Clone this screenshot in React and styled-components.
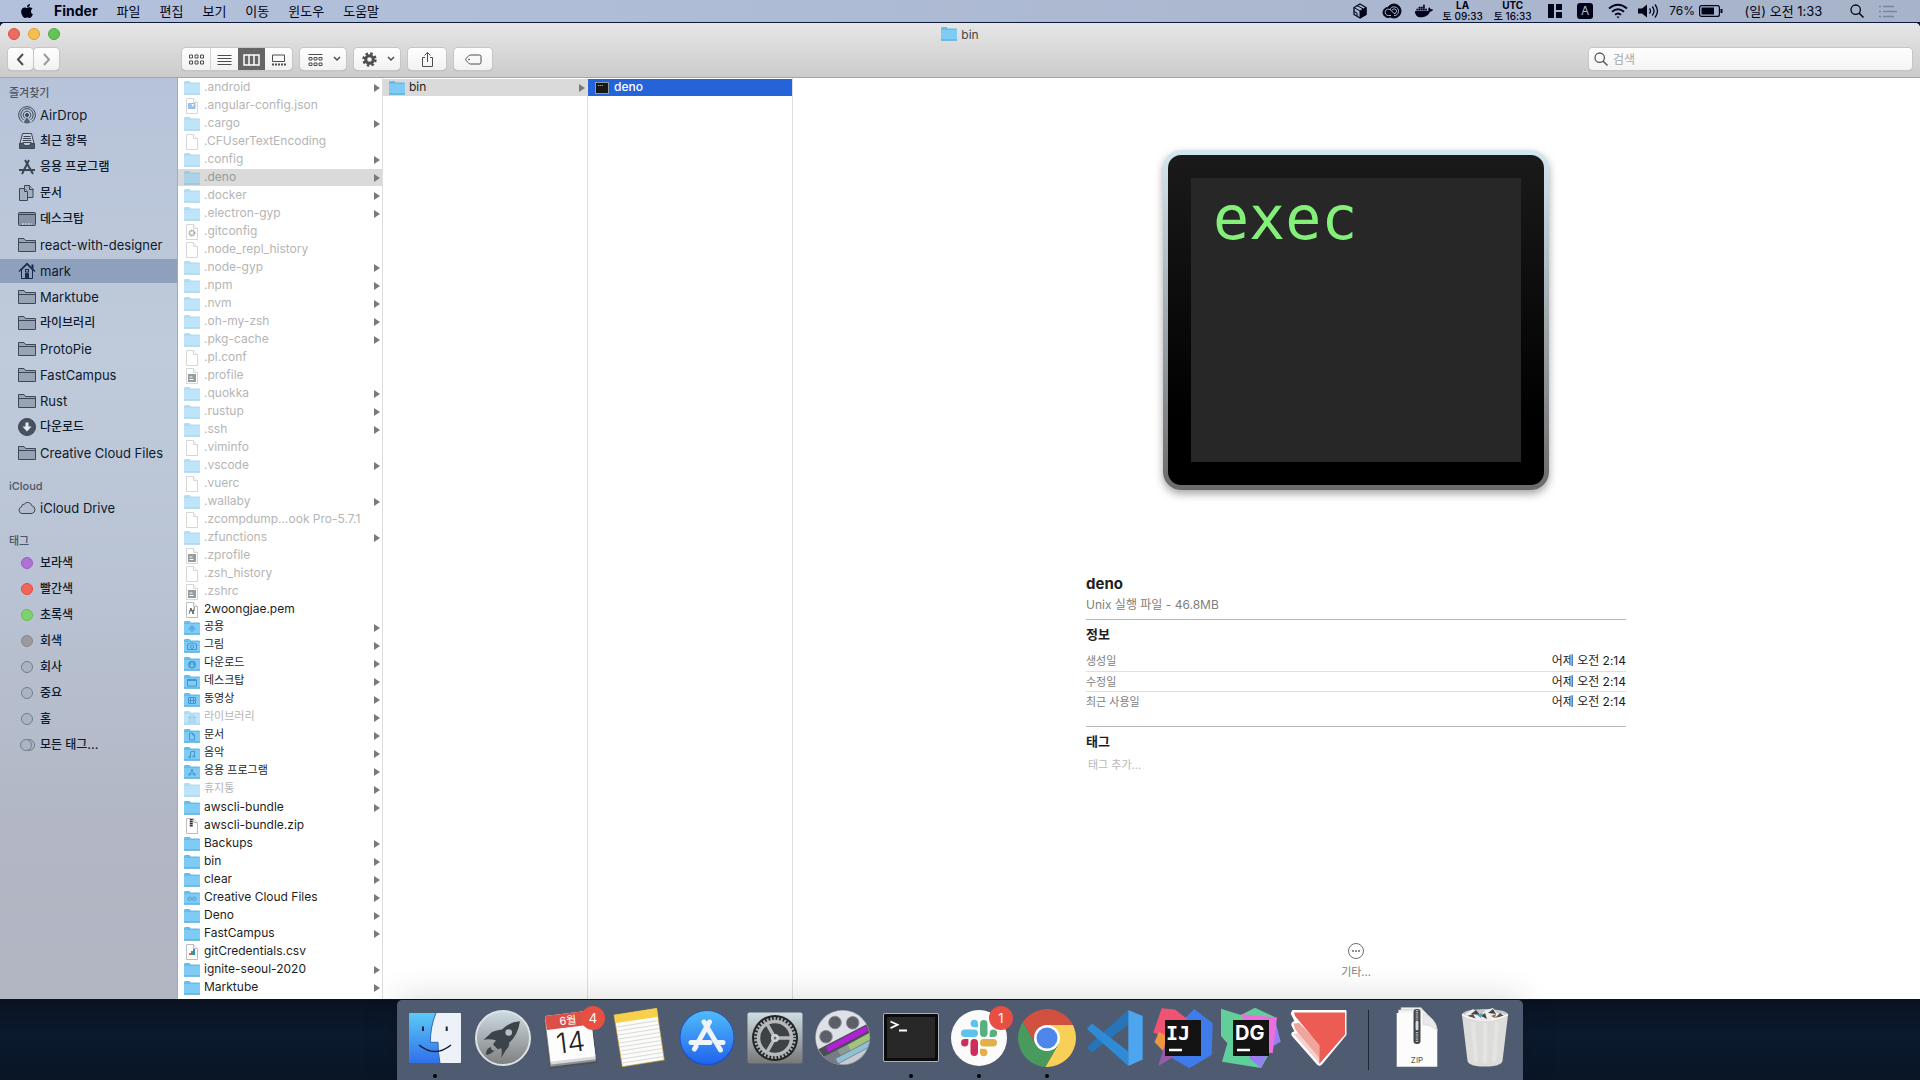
import React, { useState } from "react";
import styled, { createGlobalStyle } from "styled-components";
import { FaApple, FaDocker } from "react-icons/fa";

const StArtText = styled.text`
  font-family: ${(props) => (props.$mono ? '"DejaVu Sans Mono", monospace' : 'Inter, "Noto Sans CJK KR", sans-serif')};
  font-size: ${(props) => props.$size}px;
  font-weight: ${(props) => props.$weight || 400};
`;

const favorites = [
  { name: "AirDrop", icon: "airdrop" },
  { name: "최근 항목", icon: "recent" },
  { name: "응용 프로그램", icon: "apps" },
  { name: "문서", icon: "docs" },
  { name: "데스크탑", icon: "desktop" },
  { name: "react-with-designer", icon: "folder" },
  { name: "mark", icon: "home" },
  { name: "Marktube", icon: "folder" },
  { name: "라이브러리", icon: "folder" },
  { name: "ProtoPie", icon: "folder" },
  { name: "FastCampus", icon: "folder" },
  { name: "Rust", icon: "folder" },
  { name: "다운로드", icon: "download" },
  { name: "Creative Cloud Files", icon: "folder" },
];

const tags = [
  { name: "보라색", fill: "#b071d6", line: "#9d5cc6" },
  { name: "빨간색", fill: "#f2665a", line: "#e04a3e" },
  { name: "초록색", fill: "#7dd26c", line: "#62bd50" },
  { name: "회색", fill: "#9c9a9e", line: "#88868b" },
  { name: "회사", fill: "#aab4c2", line: "#747d8b" },
  { name: "중요", fill: "#aab4c2", line: "#747d8b" },
  { name: "홈", fill: "#aab4c2", line: "#747d8b" },
];

const dir = (name, mark) => ({ name, folder: true, mark });
const dimDir = (name, mark) => ({ name, folder: true, dim: true, mark });
const dimFile = (name, mark) => ({ name, dim: true, mark });

const files = [
  dimDir(".android"),
  dimFile(".angular-config.json", "json"),
  dimDir(".cargo"),
  dimFile(".CFUserTextEncoding"),
  dimDir(".config"),
  dimDir(".deno"),
  dimDir(".docker"),
  dimDir(".electron-gyp"),
  dimFile(".gitconfig", "gear"),
  dimFile(".node_repl_history"),
  dimDir(".node-gyp"),
  dimDir(".npm"),
  dimDir(".nvm"),
  dimDir(".oh-my-zsh"),
  dimDir(".pkg-cache"),
  dimFile(".pl.conf"),
  dimFile(".profile", "shell"),
  dimDir(".quokka"),
  dimDir(".rustup"),
  dimDir(".ssh"),
  dimFile(".viminfo"),
  dimDir(".vscode"),
  dimFile(".vuerc"),
  dimDir(".wallaby"),
  dimFile(".zcompdump…ook Pro-5.7.1"),
  dimDir(".zfunctions"),
  dimFile(".zprofile", "shell"),
  dimFile(".zsh_history"),
  dimFile(".zshrc", "shell"),
  { name: "2woongjae.pem", mark: "key" },
  dir("공용", "public"),
  dir("그림", "camera"),
  dir("다운로드", "down"),
  dir("데스크탑", "desk"),
  dir("동영상", "film"),
  dimDir("라이브러리", "library"),
  dir("문서", "paper"),
  dir("음악", "music"),
  dir("응용 프로그램", "app"),
  dimDir("휴지통"),
  dir("awscli-bundle"),
  { name: "awscli-bundle.zip", mark: "zip" },
  dir("Backups"),
  dir("bin"),
  dir("clear"),
  dir("Creative Cloud Files", "cloud"),
  dir("Deno"),
  dir("FastCampus"),
  { name: "gitCredentials.csv", mark: "chart" },
  dir("ignite-seoul-2020"),
  dir("Marktube"),
  dir(""),
];

// Hangul glyphs look bigger than latin ones, so they get one size less
const isHangul = (text) => /[가-힣]/.test(text);

const folderMarks = {
  public: <path d="M8 5.500l3 3-3 3-3-3zM8 7.200v2.600M6.700 8.500h2.600" />,
  camera: (
    <>
      <path d="M3.500 6h2l.8-1h3.400l.8 1h2v5.500h-9z" />
      <circle cx="8" cy="8.700" r="1.700" />
    </>
  ),
  down: (
    <>
      <circle cx="8" cy="8.600" r="3.500" fill="#4aa0d8" />
      <path d="M8 6.500v4M6.300 9L8 10.700 9.700 9" stroke="#9bd8f9" />
    </>
  ),
  desk: <path d="M3.500 5.500h9v6.500h-9zM3.500 6.500h9" />,
  film: <path d="M4.500 5.500h7v6h-7zM6.500 5.500v6M9.500 5.500v6M4.500 8.500h7" />,
  library: <path d="M4 7.500L8 5l4 2.500zM5.500 8v3M8 8v3M10.500 8v3M4 12h8" />,
  paper: <path d="M5.500 5h3l2 2v5h-5zM8.500 5v2h2" />,
  music: (
    <>
      <path d="M6.500 11V6l4-1v5" />
      <circle cx="5.800" cy="11" r="1" />
      <circle cx="9.800" cy="10.300" r="1" />
    </>
  ),
  app: <path d="M8.500 5L5 12M7.500 5L11 12M4 10h8" />,
  cloud: <path d="M8 8.600C6.500 6.500 4 6.700 4 8.700s2.500 2.200 4 0 4-2 4 0-2.500 2.200-4 0z" />,
};

const FolderIcon = ({ dim, mark }) => (
  <svg width="16" height="16" viewBox="0 0 16 16" opacity={dim ? 0.5 : 1} aria-hidden="true">
    <path d="M0 14.500V2.500Q0 1 1 1H5.500L6.800 2.500H15Q16 2.500 16 3.500V14.500Z" fill="#69bce8" />
    <path d="M0 4H16V13.500Q16 14.500 15 14.500H1Q0 14.500 0 13.500Z" fill="#7ecbf5" />
    <path d="M0 14H16" stroke="#58a6d0" />
    <g fill="none" stroke="#4497d0">
      {folderMarks[mark]}
    </g>
  </svg>
);

const fileMarks = {
  json: <path d="M4.500 5.500h6.500v5H4.500zM6.500 5.500l2 4.500 2.500-4.500" fill="#5a9ee8" stroke="#4f8fdc" />,
  gear: <circle cx="8" cy="9" r="2.500" fill="none" stroke="#587566" strokeWidth="2" strokeDasharray="1.400 0.600" />,
  shell: (
    <>
      <path d="M4 6h8v8H4z" fill="#4e5f61" />
      <path d="M5.500 9h3M5.500 11.500h4" stroke="#fff" />
    </>
  ),
  key: <path d="M5 12l2-6 2 6 1.500-7M5 9l6-1M6 6l4 6" fill="none" stroke="#525b5e" strokeWidth="0.800" />,
  zip: <path d="M6.500 1v8M8 1v8" stroke="#333" strokeWidth="1.500" strokeDasharray="1.500 0.500" />,
  chart: (
    <>
      <path d="M5 11V9h2v2z" fill="#ef6a36" />
      <path d="M7 11V7h2v4z" fill="#3aa55a" />
      <path d="M9 11V5h2v6z" fill="#3f82e0" />
    </>
  ),
};

const FileIcon = ({ dim, mark }) => (
  <svg width="16" height="16" viewBox="0 0 16 16" opacity={dim ? 0.6 : 1} aria-hidden="true">
    <path d="M2.500 0.500H9.500L13.500 4.500V15.500H2.500Z" fill="#fff" stroke="#bdbdbd" />
    <path d="M9.500 0.500V4.500H13.500" fill="#f4f4f4" stroke="#bdbdbd" />
    {fileMarks[mark]}
  </svg>
);

const ExecIcon = () => (
  <svg width="16" height="16" viewBox="0 0 16 16" aria-hidden="true">
    <rect x="1" y="2" width="14" height="12" fill="#8d9ba3" />
    <rect x="2" y="3" width="12" height="10" fill="#171717" />
    <path d="M4 5.500h5" stroke="#5cc454" strokeDasharray="1.500 0.500" />
  </svg>
);

const sidebarShapes = {
  airdrop: (
    <g fill="none">
      <circle cx="9" cy="9" r="1.500" fill="#3c4655" />
      <path d="M7 12.200a3.800 3.800 0 1 1 4 0M5.600 14a6.200 6.200 0 1 1 6.800 0M4.500 16.100a8.400 8.400 0 1 1 9 0" />
      <path d="M9 11l-3.500 5.500Q9 18.500 12.500 16.500z" fill="#566173" stroke="none" />
    </g>
  ),
  recent: (
    <>
      <path d="M4.500 1.500h9l2.500 10v4.500H2v-4.500z" fill="#c3cddc" />
      <path d="M5.500 4.500h7M5 6.500h8M4.700 8.500h8.600M4.500 10.500h9" />
      <path d="M1.500 11.500h4l1 2h5l1-2h4v5h-15z" fill="#4b5668" />
    </>
  ),
  apps: (
    <g fill="none" strokeWidth="2">
      <path d="M11 2L4 16M7 2l8 14M1 12h16" />
    </g>
  ),
  docs: (
    <g fill="#a4afc0">
      <path d="M6.500 1.500h5l3.500 3.500v8.500h-8.500z" />
      <path d="M11.500 1.500v4h4" />
      <path d="M1.500 4.500h5l3 3v9h-8z" />
      <path d="M6.500 4.500v3h3" />
    </g>
  ),
  desktop: (
    <>
      <rect x="0.500" y="2.500" width="17" height="13" rx="1" fill="#8692a5" />
      <path d="M1 4.500h16" />
      <path d="M4 14h10" stroke="#e0e6ee" strokeDasharray="2 1" />
    </>
  ),
  folder: (
    <>
      <path d="M0.500 15.500v-13h5.500l1.500 2h10v11z" fill="#98a4b5" />
      <path d="M0.500 6.500h17" />
    </>
  ),
  home: (
    <g stroke="#1a2a4c" fill="#8fa1be">
      <path d="M3.500 8v8.500h11V8L9 2.500z" />
      <path d="M1 9.500l8-8 8 8" fill="none" strokeWidth="1.500" />
      <path d="M14.500 2.500v4" strokeWidth="2" />
      <rect x="7.500" y="7.500" width="3" height="2.500" />
      <path d="M7.500 16v-4.500h3v4.500" fill="#1a2a4c" />
    </g>
  ),
  download: (
    <>
      <circle cx="9" cy="9" r="8.500" fill="#48525f" />
      <path d="M7.500 4.500h3v4h3L9 13.500 4.500 8.500h3z" fill="#e5ebf3" stroke="none" />
    </>
  ),
  cloud: (
    <path
      d="M4 14.500a3.400 3.400 0 0 1-.6-6.600 3 3 0 0 1 2.900-2.800 4.200 4.200 0 0 1 7.500 1.700 4 4 0 0 1 .4 7.700z"
      fill="#b3bdcc"
    />
  ),
  allTags: (
    <g fill="#aab4c2" stroke="#747d8b">
      <circle cx="11" cy="9" r="5.500" />
      <circle cx="8" cy="9" r="5.500" />
    </g>
  ),
};

const SidebarIcon = ({ name }) => (
  <svg width="18" height="18" viewBox="0 0 18 18" fill="none" stroke="#3c4655" aria-hidden="true">
    {sidebarShapes[name]}
  </svg>
);

const TagDot = ({ fill, line }) => (
  <svg width="18" height="18" viewBox="0 0 18 18" aria-hidden="true">
    <circle cx="9" cy="9" r="5.500" fill={fill} stroke={line} />
  </svg>
);

const SearchIcon = () => (
  <svg width="14" height="14" viewBox="0 0 14 14" fill="none" stroke="currentColor" aria-hidden="true">
    <circle cx="5.700" cy="5.700" r="4.700" strokeWidth="1.300" />
    <path d="M9 9l4.500 4.500" strokeWidth="1.500" />
  </svg>
);

const toolShapes = {
  back: <path d="M12 4L7 9.500l5 5.500" strokeWidth="2" />,
  forward: <path d="M7 4l5 5.500L7 15" strokeWidth="2" stroke="#9b9b9b" />,
  grid: (
    <path d="M2.500 5h3v3h-3zM8 5h3v3H8zM13.500 5h3v3h-3zM2.500 11h3v3h-3zM8 11h3v3H8zM13.500 11h3v3h-3z" />
  ),
  list: <path d="M2.500 5.500h14M2.500 8.500h14M2.500 11.500h14M2.500 14.500h14" />,
  columns: (
    <>
      <path d="M2 5h15v10H2z" strokeWidth="1.500" />
      <path d="M7 5v10M12 5v10" strokeWidth="1.500" />
    </>
  ),
  gallery: (
    <>
      <path d="M3.500 5h12v6.500h-12z" />
      <path d="M3 14.500h14" strokeWidth="2" strokeDasharray="2 1" />
    </>
  ),
  group: (
    <path d="M2.500 4.500h14M3 7.500h3v2.500H3zM8 7.500h3v2.500H8zM13 7.500h3v2.500h-3zM3 13h3v2.500H3zM8 13h3v2.500H8zM13 13h3v2.500h-3z" />
  ),
  gear: (
    <>
      <circle cx="9.500" cy="9.500" r="3.800" strokeWidth="3" />
      <circle cx="9.500" cy="9.500" r="6" strokeWidth="2.400" strokeDasharray="2.500 2.210" />
    </>
  ),
  share: <path d="M7 7.500H4.500v9h10v-9H12M9.500 12V2.500M6.500 5.500l3-3 3 3" />,
  tag: (
    <>
      <path d="M6.500 5h9q1.500 0 1.500 1.500v6q0 1.500-1.500 1.500h-9q-1.500 0-2.500-1.500L2 10.300q-.6-.8 0-1.600L4 6.500Q5 5 6.500 5z" />
      <circle cx="5" cy="9.500" r="0.500" />
    </>
  ),
};

const ToolIcon = ({ name }) => (
  <svg width="19" height="19" viewBox="0 0 19 19" fill="none" stroke="currentColor" aria-hidden="true">
    {toolShapes[name]}
  </svg>
);

const Chevron = () => (
  <svg width="8" height="6" viewBox="0 0 8 6" fill="none" stroke="#4d4d4d" strokeWidth="1.500" aria-hidden="true">
    <path d="M1 1l3 3 3-3" />
  </svg>
);

/* dock drawings, all on a 64 x 64 canvas */
const dockApps = [
  {
    name: "Finder",
    running: true,
    art: (
      <>
        <defs>
          <linearGradient id="finderBlue" x2="0" y2="1">
            <stop offset="0" stopColor="#5bcaf8" />
            <stop offset="1" stopColor="#3070ea" />
          </linearGradient>
        </defs>
        <rect x="6" y="7" width="52" height="50" rx="1" fill="url(#finderBlue)" />
        <path d="M33 7Q27.500 20 27.300 36.300H35Q35 47 37 57H57Q58 57 58 56V8Q58 7 57 7Z" fill="#edf1f8" />
        <path d="M33 7Q27.500 20 27.300 36.300H35Q35 47 37 57" fill="none" stroke="#1b4d9c" strokeWidth="0.800" />
        <path d="M20 20.500v4.500M43.700 20.500v4.500" stroke="#1d2430" strokeWidth="2" />
        <path d="M16 39Q32 52 48 39" fill="none" stroke="#142034" strokeWidth="1.600" />
      </>
    ),
  },
  {
    name: "Launchpad",
    art: (
      <>
        <defs>
          <linearGradient id="padGrey" x2="0" y2="1">
            <stop offset="0" stopColor="#cddbe3" />
            <stop offset="1" stopColor="#7e7e7e" />
          </linearGradient>
        </defs>
        <circle cx="32" cy="32" r="27" fill="url(#padGrey)" stroke="#dbe2e6" strokeWidth="2" />
        <path
          d="M49 15.300Q38 16 31 23.500Q27 23.500 21 26L12.500 34Q17 32.500 25 34.300L22 38.500L27 43.500L30 42Q31.500 45 30 52L35 44Q39 40 38 37Q47 29 49 15.300Z"
          fill="#3d4449"
        />
        <circle cx="37.700" cy="26.500" r="3.300" fill="#b6c0c5" />
        <path d="M20 41Q15 42 15 49Q21 48 24 44Q20 46 20 41Z" fill="#3d4449" />
      </>
    ),
  },
  {
    name: "캘린더",
    badge: "4",
    art: (
      <g transform="rotate(-7 32 32)">
        <path d="M7 13h48v47H7z" fill="#49515a" />
        <path d="M8 12h46v46H8z" fill="#8d9396" />
        <path d="M9 10h45v46H9z" fill="#d8dadb" />
        <path d="M9 7h45v46H9z" fill="#fdfdfd" />
        <path d="M9 7h45v14H9z" fill="#dc4f47" />
        <StArtText x="31" y="18" textAnchor="middle" $size={11} fill="#fff">
          6월
        </StArtText>
        <StArtText x="31" y="46" textAnchor="middle" $size={28} $weight={300} fill="#222">
          14
        </StArtText>
      </g>
    ),
  },
  {
    name: "메모",
    art: (
      <>
        <path d="M7 9L49.700 2.300L57.300 54L15.300 60.700Z" fill="#fbfbf8" stroke="#c69b2f" strokeWidth="0.700" />
        <path d="M7 9L49.700 2.300L50.900 10.700L9.200 17Z" fill="#f8d04a" />
        <path
          d="M9.800 21l41.500-6.500M10.400 25l41.500-6.500M11 29l41.500-6.500M11.600 33l41.500-6.500M12.200 37l41.500-6.500M12.800 41l41.500-6.500M13.400 45l41.500-6.500M14 49l41.500-6.500M14.600 53l41.500-6.500M15.200 57l41.500-6.500"
          stroke="#c8cbd0"
          strokeWidth="0.700"
        />
      </>
    ),
  },
  {
    name: "App Store",
    art: (
      <>
        <defs>
          <linearGradient id="storeBlue" x2="0" y2="1">
            <stop offset="0" stopColor="#4fbcfa" />
            <stop offset="1" stopColor="#2163ed" />
          </linearGradient>
        </defs>
        <circle cx="32" cy="32" r="27.500" fill="#1b52c7" />
        <circle cx="32" cy="31.500" r="26.500" fill="url(#storeBlue)" />
        <path
          d="M34.500 16L24 34.500M21 40.500L19.500 43M29 16L45.500 44M16 36.500H35M42 36.500H48"
          stroke="#eff3fa"
          strokeWidth="5"
          strokeLinecap="round"
        />
      </>
    ),
  },
  {
    name: "시스템 환경설정",
    art: (
      <>
        <defs>
          <linearGradient id="prefGrey" x2="0" y2="1">
            <stop offset="0" stopColor="#cfdde3" />
            <stop offset="1" stopColor="#77787a" />
          </linearGradient>
        </defs>
        <rect x="4.500" y="6.500" width="55" height="51" rx="2" fill="url(#prefGrey)" />
        <circle cx="32" cy="32" r="23" fill="#222426" />
        <circle cx="32" cy="32" r="19.500" fill="none" stroke="#a8acae" strokeWidth="3" strokeDasharray="2 1.600" />
        <circle cx="32" cy="32" r="16.500" fill="#3e4244" stroke="#b5b9bb" strokeWidth="3.500" />
        <path d="M32 32h16M32 32l-8-14M32 32l-8 14" stroke="#b5b9bb" strokeWidth="3.500" />
        <circle cx="32" cy="32" r="4" fill="#d0d3d5" />
        <circle cx="32" cy="32" r="1.500" fill="#6b7072" />
      </>
    ),
  },
  {
    name: "ScreenFlow",
    art: (
      <>
        <defs>
          <clipPath id="reelClip">
            <circle cx="31.700" cy="31.500" r="27" />
          </clipPath>
        </defs>
        <circle cx="31.700" cy="31.500" r="27.500" fill="#a7abb5" />
        <g clipPath="url(#reelClip)">
          <circle cx="31.700" cy="31.500" r="27" fill="#dfe1e9" />
          <g fill="#5d5f68" stroke="#8c8e97">
            <circle cx="24" cy="16.500" r="6.300" />
            <circle cx="41.700" cy="16.800" r="6.300" />
            <circle cx="15" cy="30.700" r="6.300" />
          </g>
          <path d="M2 46L62 15V64H2Z" fill="#4b4d56" />
          <path d="M2 56L62 26V64H2Z" fill="#777b85" />
          <path d="M16 43.500L56 22.500" stroke="#b21fd6" strokeWidth="5.500" />
          <path d="M38 41.500L60 29.500" stroke="#a3c47b" strokeWidth="6" />
          <path d="M28 46.500L38 41.500" stroke="#8d9a92" strokeWidth="6" />
          <path d="M26 55L60 37" stroke="#8fc0d6" strokeWidth="5" />
          <path d="M30 60L60 44" stroke="#c6cad2" strokeWidth="6" />
        </g>
      </>
    ),
  },
  {
    name: "터미널",
    running: true,
    art: (
      <>
        <rect x="4" y="7" width="56" height="49" rx="2" fill="#a9b5ba" />
        <rect x="5" y="8" width="54" height="47" rx="1" fill="#0c0c0c" />
        <rect x="8" y="11" width="48" height="41" fill="#282828" />
        <path d="M11.500 15.500l7 3.300-7 3.300M20 24.500h8" fill="none" stroke="#fff" strokeWidth="1.800" />
      </>
    ),
  },
  {
    name: "Slack",
    badge: "1",
    running: true,
    art: (
      <>
        <circle cx="32" cy="32" r="28" fill="#fbfbfb" />
        <g fill="#5ec2ea">
          <rect x="14" y="23.500" width="17" height="7.500" rx="3.700" />
          <path d="M31 21.200h-3.700a3.700 3.700 0 1 1 3.700-3.700z" />
        </g>
        <g fill="#56b17f">
          <rect x="33" y="14" width="7.500" height="17" rx="3.700" />
          <path d="M42.700 31v-3.700a3.700 3.700 0 1 1 3.700 3.700z" />
        </g>
        <g fill="#e1b04c">
          <rect x="33" y="33" width="17" height="7.500" rx="3.700" />
          <path d="M33 42.800h3.700a3.700 3.700 0 1 1-3.700 3.700z" />
        </g>
        <g fill="#cc2f5c">
          <rect x="23.500" y="33" width="7.500" height="17" rx="3.700" />
          <path d="M21.400 33v3.700a3.700 3.700 0 1 1-3.700-3.700z" />
        </g>
      </>
    ),
  },
  {
    name: "Chrome",
    running: true,
    art: (
      <>
        <path d="M7.800 16.100A29 29 0 0 1 57.900 19H32L20.700 38.500Z" fill="#d1503f" />
        <path d="M57.900 19A29 29 0 0 1 30.300 60.900L43.300 38.500L32 19Z" fill="#f8cf57" />
        <path d="M30.300 60.900A29 29 0 0 1 7.800 16.100L20.700 38.500H43.300Z" fill="#489b5d" />
        <circle cx="32" cy="32" r="13" fill="#fff" />
        <circle cx="32" cy="32" r="10.500" fill="#4f86ec" />
      </>
    ),
  },
  {
    name: "Visual Studio Code",
    art: (
      <>
        <path d="M45.300 4L4.500 40.500Q4 41.500 5 42.500L8 45.700Q9 46.500 10 45.700L45.300 18.500Z" fill="#2775b8" />
        <path d="M45.300 60L4.500 23.500Q4 22.500 5 21.500L8 18.300Q9 17.500 10 18.300L45.300 45.500Z" fill="#2f8bd6" />
        <path d="M45.300 4L59.700 10V53.500L45.300 60Z" fill="#4ca5ee" />
      </>
    ),
  },
  {
    name: "IntelliJ IDEA",
    art: (
      <>
        <path d="M43.300 3L61.700 17.300L60.700 49L38.300 62.300L19 51L30 16Z" fill="#3f7bea" />
        <path d="M10.700 2.300L24 3.500L40 16L34 40L2.300 26.500Z" fill="#ee5373" />
        <path d="M8 26L3.500 36L14 47L24 34Z" fill="#f0963e" />
        <path d="M14 38L7.300 60L24 50L30 44Z" fill="#985bac" />
        <rect x="14" y="14" width="36" height="36" fill="#131313" />
        <path d="M18 44h13" stroke="#fff" strokeWidth="2.500" />
        <StArtText x="15" y="34" $size={20} $weight={700} $mono fill="#fff">
          IJ
        </StArtText>
      </>
    ),
  },
  {
    name: "DataGrip",
    art: (
      <>
        <path d="M2 2.700L22 9L36 1.700L57.700 12L40 30L9 38L2 30Z" fill="#63cf98" />
        <path d="M9.300 34L3 55.700L42 62L51 46L30 30Z" fill="#5fd09b" />
        <path d="M56 14L61.700 35.700L51 42L42 62L30 52Z" fill="#967ff0" />
        <path d="M22 8L58 11.500L53.700 47.300L40 44Z" fill="#ec6fe0" />
        <rect x="14" y="14" width="36" height="36" fill="#131313" />
        <path d="M18 44h13" stroke="#fff" strokeWidth="2.500" />
        <StArtText x="16" y="34" $size={20} $weight={700} fill="#fff">
          DG
        </StArtText>
      </>
    ),
  },
  {
    name: "ProtoPie",
    art: (
      <>
        <path
          d="M6 5H58.500V28.500L34 58Q32.300 59.500 31 58L5.500 29Q4.500 26.500 9 26L5.500 19.500Q4.500 16 9 16L4.800 7.500Z"
          fill="#fff"
          stroke="#fff"
          strokeWidth="2"
          strokeLinejoin="round"
        />
        <path d="M6.500 28L12 27L32.300 47V57.500Z" fill="#f6cfca" />
        <path d="M6.500 17.500L12 17L32.300 37V52L8 23Z" fill="#efa49c" />
        <path d="M7 6.500H58V28.500L32.300 58V39L8 10Z" fill="#ec5c54" />
      </>
    ),
  },
];

const dockPlaces = [
  {
    name: "압축 파일",
    art: (
      <>
        <path d="M16 1.500H36L45 12V50H16Z" fill="#eee" stroke="#bbb" strokeWidth="0.500" />
        <path d="M13.500 4H38L48 14V56H13.500Z" fill="#f4f4f4" stroke="#bbb" strokeWidth="0.500" />
        <path d="M11.700 7H38Q40 15 38 19Q46 17 52.300 23V60.700H11.700Z" fill="#fcfcfc" />
        <path d="M38 7Q52 13 52.300 25Q46 18 38 19Z" fill="#e9e9e9" stroke="#ccc" strokeWidth="0.500" />
        <rect x="28.500" y="3" width="7" height="35" rx="3" fill="#43474b" />
        <path d="M32 4v32" stroke="#b5bcc1" strokeWidth="2.500" strokeDasharray="1.200 1" />
        <rect x="30" y="14" width="4" height="11" rx="2" fill="#d5dade" stroke="#33373a" />
        <StArtText x="32" y="57" textAnchor="middle" $size={8} fill="#555">
          ZIP
        </StArtText>
      </>
    ),
  },
  {
    name: "휴지통",
    art: (
      <>
        <ellipse cx="32" cy="8.500" rx="23" ry="5.500" fill="#c5c7c8" />
        <path d="M12 8L20 3L27 9L33 4L40 2L44 7L52 8L46 13H18Z" fill="#efefef" />
        <path d="M18 8l5-4 4 5zM35 7l5-4 3 5zM28 10l4-3 2 6z" fill="#474646" />
        <path d="M14 10l6-2 3 5zM42 12l5-5 4 3z" fill="#55524f" />
        <path d="M24 9l6-2-2 5z" fill="#40a7c9" />
        <path d="M38 10l5-2-1 4z" fill="#a7623c" />
        <path d="M9 9Q32 19 55 9L49.500 55Q48 60.500 32 60.500Q16 60.500 14.500 55Z" fill="#dcdcdb" />
        <path d="M20 16L23 56M32 17V57M44 16L41 56" stroke="#e4e4e3" strokeWidth="4" />
        <path d="M9 8.500Q32 20 55 8.500" fill="none" stroke="#f6f6f6" strokeWidth="1.500" />
      </>
    ),
  },
];

const DockItem = ({ app }) => (
  <StDockItem type="button" aria-label={app.name}>
    <svg width="64" height="64" viewBox="0 0 64 64" aria-hidden="true">
      {app.art}
    </svg>
    {app.badge && <StBadge>{app.badge}</StBadge>}
    {app.running && <StDot />}
  </StDockItem>
);

const FileRow = ({ file, selected, onSelect }) => (
  <StFileRow type="button" $dim={file.dim} $selected={selected} onClick={onSelect}>
    {file.folder ? <FolderIcon dim={file.dim} mark={file.mark} /> : <FileIcon dim={file.dim} mark={file.mark} />}
    <StFileName $hangul={isHangul(file.name)}>{file.name}</StFileName>
    {file.folder && <StArrow />}
  </StFileRow>
);

const MenuBar = () => (
  <StMenuBar>
    <StMenuLeft>
      <StMenuButton type="button" aria-label="Apple">
        <FaApple size={16} />
      </StMenuButton>
      <StMenuButton type="button" $bold>
        Finder
      </StMenuButton>
      {["파일", "편집", "보기", "이동", "윈도우", "도움말"].map((menu) => (
        <StMenuButton key={menu} type="button">
          {menu}
        </StMenuButton>
      ))}
    </StMenuLeft>
    <StMenuRight>
      <svg width="14" height="16" viewBox="0 0 14 16" fill="none" stroke="#000419" aria-hidden="true">
        <path d="M7 1l6 3.500v7L7 15l-6-3.500v-7z" strokeWidth="1.300" />
        <path d="M7 8l6-3.500v7L7 15z" fill="#000419" />
        <path d="M1 4.500L7 8M4 2.500l6 3.300M1 8.500L4 10v3" />
      </svg>
      <svg width="20" height="16" viewBox="0 0 20 16" fill="none" stroke="#000419" aria-hidden="true">
        <circle cx="12" cy="8" r="7" fill="#000419" />
        <circle cx="6" cy="9.500" r="5" fill="#000419" />
        <path d="M9 12.500H6.500a3.200 3.200 0 1 1 2-5.600l4 4M8 7a4.300 4.300 0 1 1 4 5.500" stroke="#aebad0" />
        <path d="M10 7.500a2.300 2.300 0 1 1 2 3" stroke="#aebad0" />
      </svg>
      <StClocks>
        <FaDocker size={18} />
        <StClock>
          <b>LA</b>
          <span>토 09:33</span>
        </StClock>
        <StClock>
          <b>UTC</b>
          <span>토 16:33</span>
        </StClock>
      </StClocks>
      <svg width="14" height="14" viewBox="0 0 14 14" fill="#000419" aria-hidden="true">
        <path d="M0 0h6v14H0zM8 0h6v6H8zM8 8h6v6H8z" />
      </svg>
      <StInputMode>A</StInputMode>
      <StStatus>
        <svg width="20" height="16" viewBox="0 0 20 16" fill="none" stroke="#000419" strokeWidth="1.900" aria-hidden="true">
          <path d="M1 5.500q9-7.500 18 0M4 8.700q6-5 12 0M7 11.700q3-2.500 6 0" />
          <path d="M8.500 13.500h3L10 15.500z" fill="#000419" stroke="none" />
        </svg>
        <svg width="21" height="16" viewBox="0 0 21 16" fill="none" stroke="#000419" aria-hidden="true">
          <path d="M0 5.500h4L9 1.500v13l-5-4H0z" fill="#000419" stroke="none" />
          <path d="M11.500 5.500q2 2.500 0 5M14.300 3.500q3.500 4.500 0 9M17 1.500q5 6.500 0 13" strokeWidth="1.300" />
        </svg>
        <StBattery>
          76%
          <svg width="24" height="14" viewBox="0 0 24 14" fill="none" stroke="#000419" aria-hidden="true">
            <rect x="0.600" y="1.600" width="19.800" height="10.800" rx="2" strokeWidth="1.200" />
            <rect x="2.500" y="3.500" width="12.500" height="7" fill="#000419" stroke="none" />
            <path d="M22.500 5v4" strokeWidth="2" />
          </svg>
        </StBattery>
      </StStatus>
      <StDate>(일) 오전 1:33</StDate>
      <StMenuButton type="button" aria-label="Spotlight">
        <SearchIcon />
      </StMenuButton>
      <svg width="18" height="13" viewBox="0 0 18 13" fill="none" stroke="#7884a0" strokeWidth="1.500" aria-hidden="true">
        <path d="M0 1.500h2M4 1.500h11M0 6.500h2M4 6.500h14M0 11.500h2M4 11.500h11" />
      </svg>
    </StMenuRight>
  </StMenuBar>
);

const views = ["grid", "list", "columns", "gallery"];

const Toolbar = () => {
  const [view, setView] = useState("columns");

  return (
    <StHeader>
      <StTitleRow>
        <StLights>
          <StLight type="button" aria-label="닫기" $color="#ed6b5f" $line="#d25348" />
          <StLight type="button" aria-label="최소화" $color="#f5be4f" $line="#d9a03b" />
          <StLight type="button" aria-label="확대" $color="#62c555" $line="#4cab40" />
        </StLights>
        <StTitle>
          <FolderIcon />
          bin
        </StTitle>
      </StTitleRow>
      <StTools>
        <StNav>
          <StTool type="button" aria-label="뒤로" $width={25}>
            <ToolIcon name="back" />
          </StTool>
          <StTool type="button" aria-label="앞으로" $width={25}>
            <ToolIcon name="forward" />
          </StTool>
        </StNav>
        <StSegments>
          {views.map((v) => (
            <StSegment key={v} type="button" aria-label={v} $active={view === v} onClick={() => setView(v)}>
              <ToolIcon name={v} />
            </StSegment>
          ))}
        </StSegments>
        <StTool type="button" aria-label="정렬" $width={46}>
          <ToolIcon name="group" />
          <Chevron />
        </StTool>
        <StTool type="button" aria-label="동작" $width={46}>
          <ToolIcon name="gear" />
          <Chevron />
        </StTool>
        <StTool type="button" aria-label="공유" $width={38}>
          <ToolIcon name="share" />
        </StTool>
        <StTool type="button" aria-label="태그 편집" $width={38}>
          <ToolIcon name="tag" />
        </StTool>
        <StSearch>
          <SearchIcon />
          <StSearchInput type="search" placeholder="검색" aria-label="검색" />
        </StSearch>
      </StTools>
    </StHeader>
  );
};

const Sidebar = () => {
  const [place, setPlace] = useState("mark");

  return (
    <StSidebar>
      <StSideTitle>즐겨찾기</StSideTitle>
      <StSideList>
        {favorites.map(({ name, icon }) => (
          <StSideItem
            key={name}
            type="button"
            $hangul={isHangul(name)}
            $selected={place === name}
            onClick={() => setPlace(name)}
          >
            <SidebarIcon name={icon} />
            {name}
          </StSideItem>
        ))}
      </StSideList>
      <StSideTitle>iCloud</StSideTitle>
      <StSideList>
        <StSideItem type="button">
          <SidebarIcon name="cloud" />
          iCloud Drive
        </StSideItem>
      </StSideList>
      <StSideTitle>태그</StSideTitle>
      <StSideList>
        {tags.map((tag) => (
          <StSideItem key={tag.name} type="button" $hangul>
            <TagDot fill={tag.fill} line={tag.line} />
            {tag.name}
          </StSideItem>
        ))}
        <StSideItem type="button" $hangul>
          <SidebarIcon name="allTags" />
          모든 태그...
        </StSideItem>
      </StSideList>
    </StSidebar>
  );
};

const Preview = () => (
  <StPreview>
    <StExecFrame>
      <StExecBezel>
        <StExecScreen>exec</StExecScreen>
      </StExecBezel>
    </StExecFrame>
    <StInfo>
      <StInfoName>deno</StInfoName>
      <StInfoKind>Unix 실행 파일 - 46.8MB</StInfoKind>
      <StInfoTitle>정보</StInfoTitle>
      <StInfoTable>
        <tbody>
          {["생성일", "수정일", "최근 사용일"].map((label) => (
            <tr key={label}>
              <th scope="row">{label}</th>
              <td>어제 오전 2:14</td>
            </tr>
          ))}
        </tbody>
      </StInfoTable>
      <StInfoTitle>태그</StInfoTitle>
      <StTagInput type="text" placeholder="태그 추가..." aria-label="태그 추가" />
    </StInfo>
    <StMore type="button">
      <svg width="16" height="16" viewBox="0 0 16 16" fill="none" stroke="#6f6f6f" aria-hidden="true">
        <circle cx="8" cy="8" r="7.500" />
        <path d="M4 8h2M7 8h2M10 8h2" strokeWidth="1.500" />
      </svg>
      기타...
    </StMore>
  </StPreview>
);

const App = () => {
  const [selected, setSelected] = useState(".deno");

  return (
    <>
      <GlobalStyle />
      <StDesktop>
        <MenuBar />
        <StWindow>
          <Toolbar />
          <StBody>
            <Sidebar />
            <StColumn>
              {files.map((file) => (
                <FileRow
                  key={file.name}
                  file={file}
                  selected={selected === file.name}
                  onSelect={() => setSelected(file.name)}
                />
              ))}
            </StColumn>
            <StColumn>
              <FileRow file={dir("bin")} selected />
            </StColumn>
            <StColumn>
              <StFileRow type="button" $active>
                <ExecIcon />
                <StFileName>deno</StFileName>
              </StFileRow>
            </StColumn>
            <Preview />
          </StBody>
        </StWindow>
        <StDockArea>
          <StDock>
            {dockApps.map((app) => (
              <DockItem key={app.name} app={app} />
            ))}
            <StDivider />
            {dockPlaces.map((app) => (
              <DockItem key={app.name} app={app} />
            ))}
          </StDock>
        </StDockArea>
      </StDesktop>
    </>
  );
};

export default App;

const GlobalStyle = createGlobalStyle`
  * {
    box-sizing: border-box;
  }
  body {
    margin: 0;
    font-family: Inter, "Noto Sans CJK KR", sans-serif;
    color: #1e1e1e;
  }
  button, input {
    margin: 0;
    padding: 0;
    border: none;
    background: none;
    font: inherit;
    color: inherit;
  }
  svg {
    flex: none;
    display: block;
  }
`;

const StDesktop = styled.div`
  height: 100vh;
  display: flex;
  flex-direction: column;
  overflow: hidden;
  background: linear-gradient(#0c1c3c 0, #0a1120 92%, #0b1a2e 96%, #0a1526 100%);
`;

/* menu bar */
const StMenuBar = styled.header`
  flex: none;
  height: 22px;
  margin-bottom: 1px;
  padding: 0 23px 0 19px;
  display: flex;
  justify-content: space-between;
  background: linear-gradient(90deg, #b3c1dc, #a7b3c9);
  color: #000419;
  font-size: 13px;
  line-height: 22px;
`;
const StMenuLeft = styled.nav`
  display: flex;
  align-items: center;
  gap: 19px;
`;
const StMenuRight = styled.div`
  display: flex;
  align-items: center;
  gap: 15px;
`;
const StMenuButton = styled.button`
  display: flex;
  align-items: center;
  font-size: ${(props) => (props.$bold ? 14 : 13)}px;
  font-weight: ${(props) => (props.$bold ? 700 : 400)};
  line-height: 22px;
  white-space: nowrap;
`;
const StClocks = styled.div`
  margin-left: -2px;
  display: flex;
  align-items: center;
  gap: 9px;
`;
const StClock = styled.div`
  width: 41px;
  display: flex;
  flex-direction: column;
  align-items: center;
  font-size: 10px;
  font-weight: 500;
  line-height: 11px;
  white-space: nowrap;
`;
const StInputMode = styled.span`
  width: 16px;
  height: 16px;
  border-radius: 3px;
  background: #000419;
  color: #b0bcd2;
  font-size: 12px;
  line-height: 16px;
  text-align: center;
`;
const StStatus = styled.div`
  display: flex;
  align-items: center;
  gap: 10px;
`;
const StBattery = styled.span`
  display: flex;
  align-items: center;
  gap: 4px;
  font-size: 12px;
`;
const StDate = styled.span`
  min-width: 81px;
  margin: 0 11px 0 5px;
  text-align: center;
`;

/* window */
const StWindow = styled.main`
  flex: 1;
  min-height: 0;
  display: flex;
  flex-direction: column;
  border-radius: 5px 5px 0 0;
  overflow: hidden;
  background: #fff;
`;
const StHeader = styled.div`
  flex: none;
  padding: 0 8px 7px;
  border-bottom: 1px solid #a5a5a5;
  background: linear-gradient(#e6e6e6, #cbcbcb);
`;
const StTitleRow = styled.div`
  display: grid;
  grid-template-columns: 1fr auto 1fr;
  align-items: center;
  height: 22px;
  margin-bottom: 3px;
`;
const StLights = styled.div`
  display: flex;
  gap: 8px;
`;
const StLight = styled.button`
  width: 12px;
  height: 12px;
  border-radius: 50%;
  border: 1px solid ${(props) => props.$line};
  background: ${(props) => props.$color};
`;
const StTitle = styled.div`
  display: flex;
  align-items: center;
  gap: 4px;
  font-size: 12px;
  color: #454545;
`;
const StTools = styled.div`
  display: flex;
  gap: 8px;
`;
const StNav = styled.div`
  display: flex;
  gap: 1px;
  margin-right: 115px;
`;
const StTool = styled.button`
  width: ${(props) => props.$width}px;
  height: 22px;
  display: flex;
  align-items: center;
  justify-content: center;
  gap: 8px;
  border-radius: 4px;
  background: linear-gradient(#fefefe, #f2f2f2);
  box-shadow: 0 0 0 1px #c6c6c6, 0 1px 1px #999;
  color: #4d4d4d;
`;
const StSegments = styled.div`
  display: flex;
  border-radius: 4px;
  overflow: hidden;
  background: linear-gradient(#fefefe, #f2f2f2);
  box-shadow: 0 0 0 1px #c6c6c6, 0 1px 1px #999;
`;
const StSegment = styled.button`
  width: 27px;
  height: 22px;
  display: flex;
  align-items: center;
  justify-content: center;
  background: ${(props) => (props.$active ? "#666" : "none")};
  color: ${(props) => (props.$active ? "#fff" : "#4d4d4d")};
  &:first-child {
    width: 29px;
    border-right: 1px solid #d2d2d2;
  }
`;
const StSearch = styled.label`
  width: 323px;
  height: 22px;
  margin-left: auto;
  padding-left: 5px;
  display: flex;
  align-items: center;
  gap: 5px;
  border-radius: 4px;
  background: linear-gradient(#fefefe, #f4f4f4);
  box-shadow: 0 0 0 1px #c6c6c6, 0 1px 1px #aaa;
  color: #595959;
`;
const StSearchInput = styled.input`
  flex: 1;
  min-width: 0;
  outline: none;
  font-size: 12px;
  &::placeholder {
    color: #a8a8a8;
  }
`;
const StBody = styled.div`
  flex: 1;
  min-height: 0;
  display: flex;
`;

/* sidebar */
const StSidebar = styled.aside`
  flex: none;
  width: 178px;
  padding-top: 5px;
  border-right: 1px solid #a3abb9;
  background: linear-gradient(#b7c3d9 0, #bfcada 30%, #b9c3d3 55%, #b2b7c5 80%, #b2b5c2 100%);
  overflow: hidden;
`;
const StSideTitle = styled.h2`
  margin: 0;
  padding-left: 9px;
  font-size: 11px;
  font-weight: 500;
  line-height: 20px;
  color: #4b5567;
`;
const StSideList = styled.div`
  display: flex;
  flex-direction: column;
  gap: 2px;
  margin-bottom: 11px;
`;
const StSideItem = styled.button`
  height: 24px;
  padding-left: 18px;
  display: flex;
  align-items: center;
  gap: 4px;
  background: ${(props) => (props.$selected ? "#8fa0bc" : "none")};
  font-size: ${(props) => (props.$hangul ? 12 : 13)}px;
  font-weight: ${(props) => (props.$hangul ? 500 : 400)};
  line-height: 24px;
  color: #0d1a2d;
  white-space: nowrap;
`;

/* columns */
const StColumn = styled.div`
  flex: none;
  width: 205px;
  padding-top: 1px;
  border-right: 1px solid #dedede;
  display: flex;
  flex-direction: column;
  gap: 1px;
  overflow: hidden;
`;
const StFileRow = styled.button`
  flex: none;
  height: 17px;
  padding: 0 2px 0 6px;
  display: flex;
  align-items: center;
  gap: 4px;
  background: ${(props) => (props.$active ? "#2464d8" : props.$selected ? "#dadada" : "none")};
  color: ${(props) => (props.$active ? "#fff" : props.$dim ? (props.$selected ? "#9b9b9b" : "#b5b5b5") : "#1e1e1e")};
  font-weight: ${(props) => (props.$active ? 500 : 400)};
  text-align: left;
  white-space: nowrap;
`;
const StFileName = styled.span`
  flex: 1;
  padding-bottom: 2px;
  font-size: ${(props) => (props.$hangul ? 11 : 12)}px;
  line-height: 15px;
`;
const StArrow = styled.span`
  border-left: 6px solid #7a7a7a;
  border-top: 4px solid transparent;
  border-bottom: 4px solid transparent;
`;

/* preview */
const StPreview = styled.section`
  flex: 1;
  min-width: 0;
  padding: 72px 25px 19px 24px;
  display: flex;
  flex-direction: column;
  align-items: center;
`;
const StExecFrame = styled.div`
  flex: none;
  padding: 5px;
  border-radius: 18px;
  background: linear-gradient(#d3e7f0, #6c6a6b);
  box-shadow: 0 4px 8px rgba(0, 0, 0, 0.35);
`;
const StExecBezel = styled.div`
  padding: 23px;
  border-radius: 13px;
  background: linear-gradient(#1a1a1a, #000 80%);
`;
const StExecScreen = styled.div`
  width: 330px;
  height: 284px;
  padding: 10px 22px;
  background: #272727;
  color: #84f07a;
  font-family: "DejaVu Sans Mono", monospace;
  font-size: 60px;
  line-height: 60px;
`;
const StInfo = styled.div`
  width: 100%;
  max-width: 540px;
  margin-top: 84px;
  font-size: 11px;
`;
const StInfoName = styled.h1`
  margin: 0;
  font-size: 15px;
  font-weight: 700;
  line-height: 20px;
`;
const StInfoKind = styled.p`
  margin: 0;
  padding-bottom: 4px;
  font-size: 12px;
  line-height: 21px;
  color: #808080;
`;
const StInfoTitle = styled.h2`
  margin: 0;
  border-top: 1px solid #b9b9b9;
  font-size: 13px;
  font-weight: 700;
  line-height: 29px;
`;
const StInfoTable = styled.table`
  width: 100%;
  margin: 2px 0 15px;
  border-collapse: collapse;
  th,
  td {
    height: 20px;
    padding: 1px 0 0;
    font-weight: 400;
    line-height: 18px;
    text-align: left;
    color: #808080;
  }
  td {
    font-size: 12px;
    text-align: right;
    color: #1e1e1e;
  }
  tr + tr {
    border-top: 1px solid #dfdfdf;
  }
`;
const StTagInput = styled.input`
  width: 100%;
  height: 18px;
  padding-left: 2px;
  outline: none;
  &::placeholder {
    color: #b8b8b8;
  }
`;
const StMore = styled.button`
  margin-top: auto;
  display: flex;
  flex-direction: column;
  align-items: center;
  gap: 5px;
  font-size: 11px;
  line-height: 16px;
  color: #808080;
`;

/* dock */
const StDockArea = styled.footer`
  flex: none;
  padding-top: 1px;
  display: flex;
  justify-content: center;
`;
const StDock = styled.nav`
  height: 80px;
  padding: 6px 4px 0;
  display: flex;
  z-index: 1;
  border-radius: 5px 5px 0 0;
  background: #4f5b70;
  box-shadow: 0 0 36px rgba(0, 0, 0, 0.16);
`;
const StDockItem = styled.button`
  position: relative;
  width: 68px;
  display: flex;
  flex-direction: column;
  align-items: center;
`;
const StBadge = styled.span`
  position: absolute;
  top: 0;
  right: 0;
  width: 24px;
  height: 24px;
  border-radius: 50%;
  background: #e74f43;
  color: #fff;
  font-size: 13px;
  line-height: 24px;
  text-align: center;
`;
const StDot = styled.span`
  width: 4px;
  height: 4px;
  margin-top: 4px;
  border-radius: 50%;
  background: #000;
`;
const StDivider = styled.span`
  width: 1px;
  height: 60px;
  margin: 4px 14px 0 15px;
  background: #1d2837;
`;
